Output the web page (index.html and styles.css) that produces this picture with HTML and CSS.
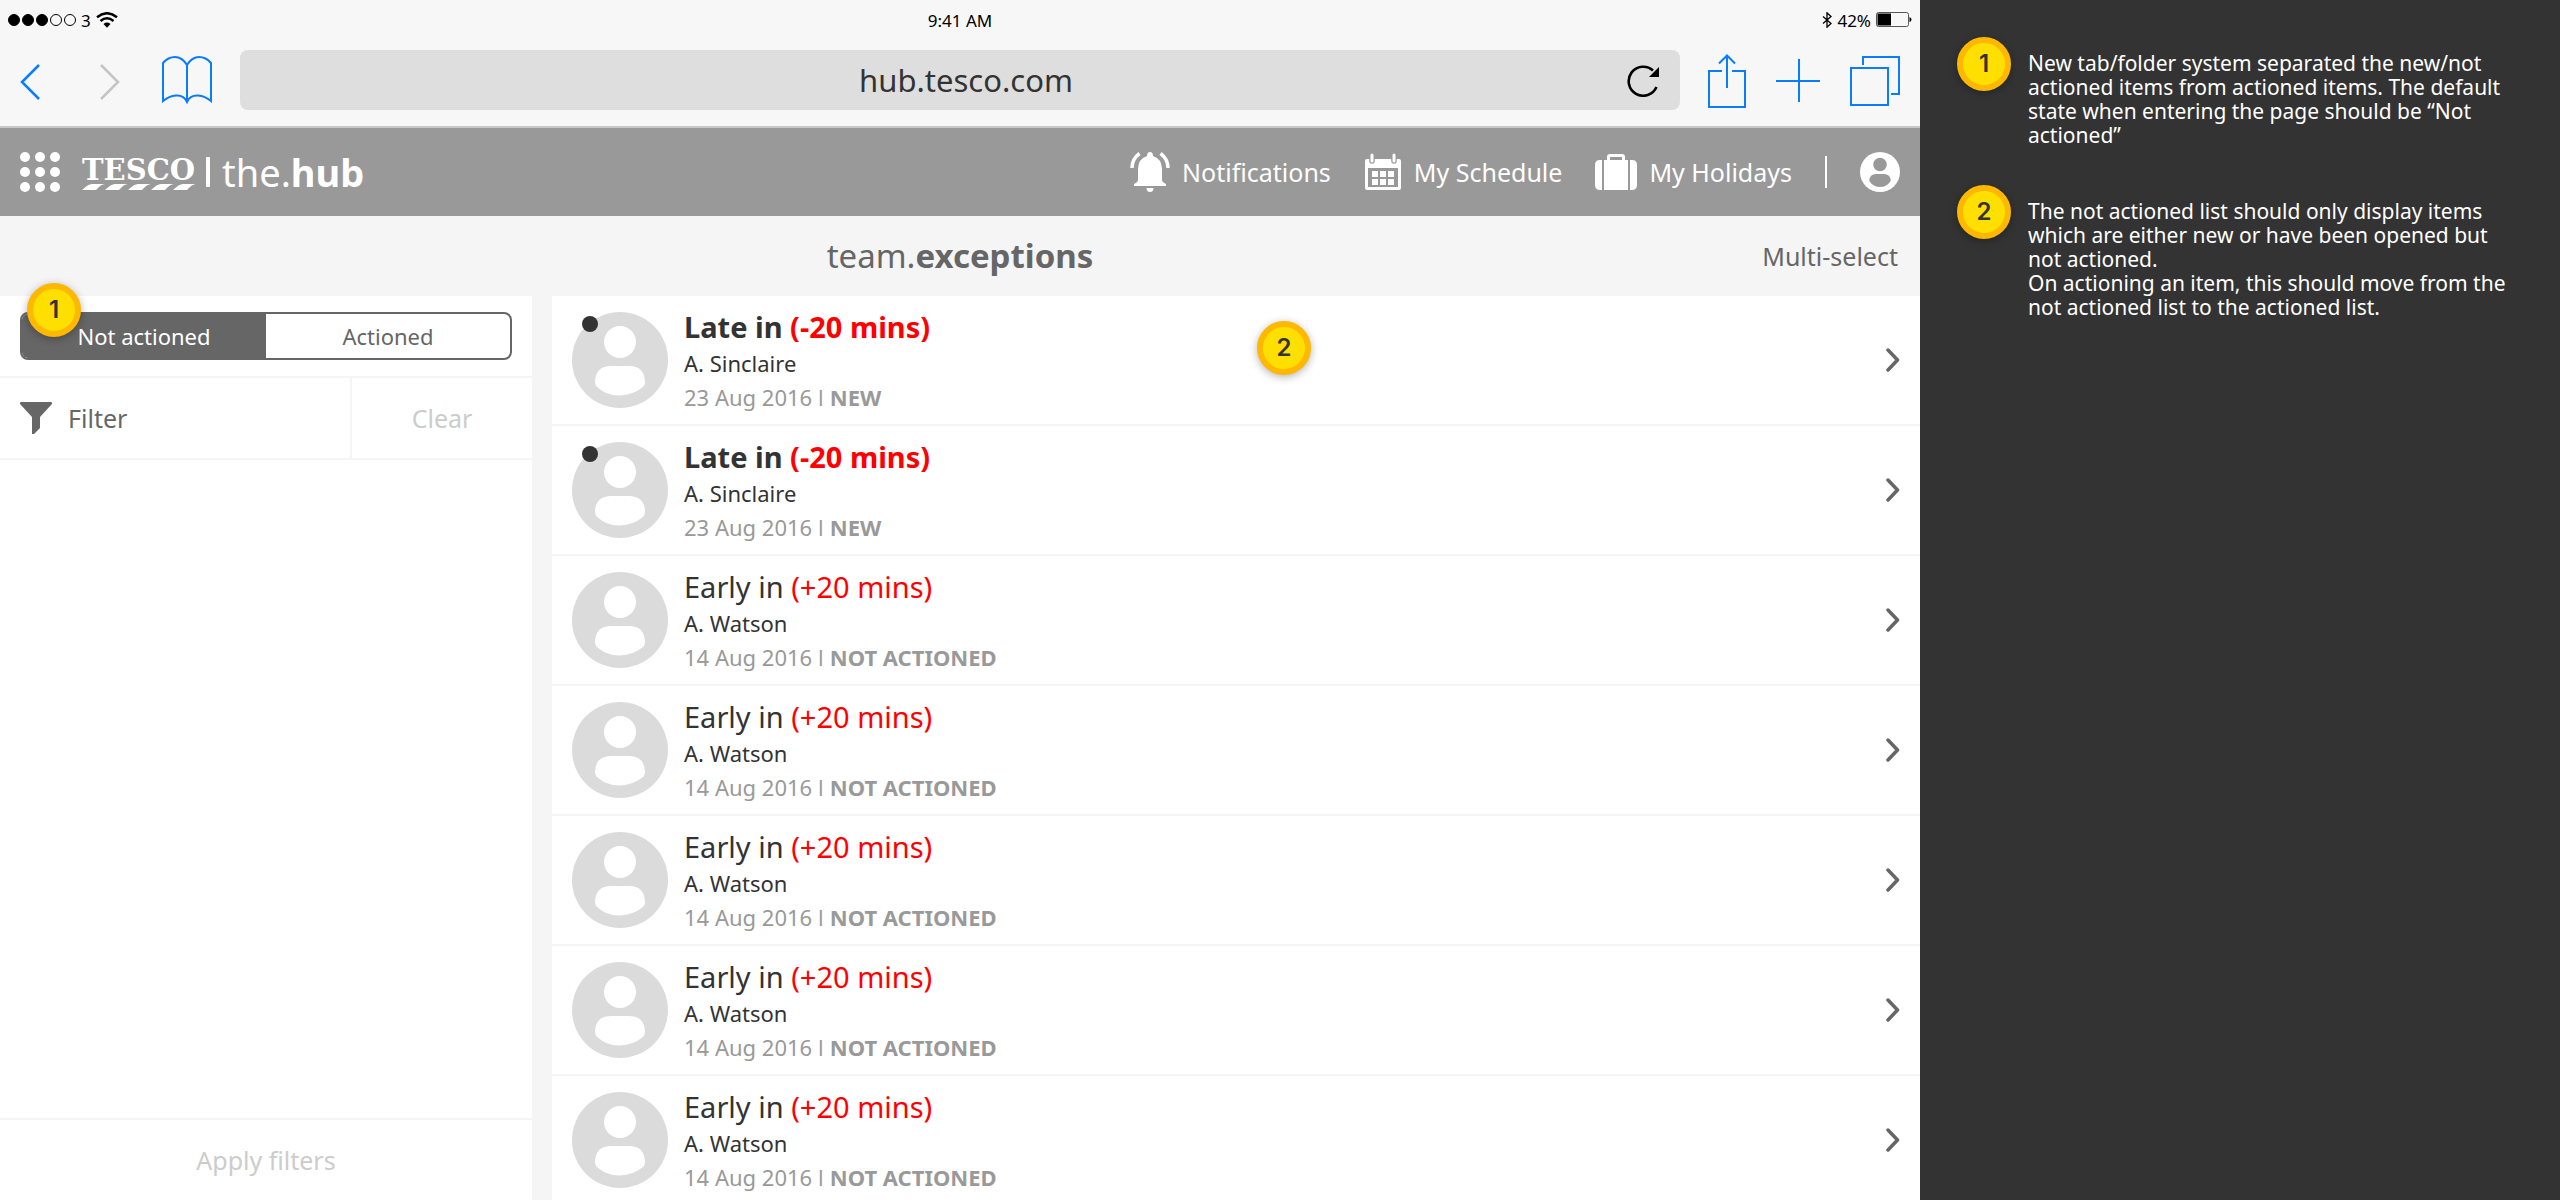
FILE: index.html
```html
<!DOCTYPE html>
<html lang="en">
<head>
<meta charset="utf-8">
<title>team.exceptions</title>
<link rel="stylesheet" href="styles.css">
</head>
<body>
<svg class="defs" aria-hidden="true">
  <symbol id="person" viewBox="0 0 96 96">
    <circle cx="48" cy="48" r="48" fill="#dbdbdb"/>
    <circle cx="48" cy="30" r="16" fill="#fff"/>
    <path d="M23 70v-1q1-15 16-15h18q15 0 16 15v1q0 3-2 5Q61 83 48 83.500T25 75q-2-2-2-5z" fill="#fff"/>
  </symbol>
  <symbol id="chevron" viewBox="0 0 14 24">
    <path d="M2 2l9.500 10L2 22" fill="none" stroke="#666" stroke-width="3.500" stroke-linecap="round" stroke-linejoin="round"/>
  </symbol>
</svg>
<div class="board">
  <div class="device">
    <div class="browser">
      <div class="status">
        <div class="status-left">
          <svg width="68" height="12" viewBox="0 0 68 12"><g stroke="#000"><circle cx="6" cy="6" r="5.500"/><circle cx="20" cy="6" r="5.500"/><circle cx="34" cy="6" r="5.500"/><circle cx="48" cy="6" r="5.500" fill="none"/><circle cx="62" cy="6" r="5.500" fill="none"/></g></svg>
          <span>3</span>
          <svg width="22" height="16" viewBox="0 0 22 16"><g fill="none" stroke="#000" stroke-width="2.400"><path d="M1 5.200Q11-2.800 21 5.200"/><path d="M4.500 9Q11 3.500 17.500 9"/></g><path d="M7.500 12Q11 9.200 14.500 12L11 15.800z"/></svg>
        </div>
        <time>9:41 AM</time>
        <div class="status-right">
          <svg width="10" height="16" viewBox="0 0 10 16"><path d="M1 4.500l8 7-4 3.700V.8l4 3.700-8 7" fill="none" stroke="#000" stroke-width="1.300"/></svg>
          <span>42%</span>
          <svg width="36" height="16" viewBox="0 0 36 16"><rect x=".5" y=".5" width="32" height="14" rx="2" fill="none" stroke="#555"/><path d="M1.500 1.500H15v12H1.500zM33.500 5q2 .5 2 2.500t-2 2.500z"/></svg>
        </div>
      </div>
      <div class="toolbar">
        <button class="tool" aria-label="Back"><svg width="20" height="40" viewBox="0 -4 20 40"><path d="M19 1L2 18l17 17" fill="none" stroke="#0a7cff" stroke-width="2.500"/></svg></button>
        <button class="tool forward" aria-label="Forward"><svg width="20" height="40" viewBox="0 -4 20 40"><path d="M1 1l17 17L1 35" fill="none" stroke="#c4c4c4" stroke-width="2.500"/></svg></button>
        <button class="tool book" aria-label="Bookmarks"><svg width="50" height="48" viewBox="0 0 50 48"><path d="M25 9Q20 1 13 1T1 7v38q6-5 13-5.500Q22 39 25 46q3-7 11-6.500Q43 40 49 45V7Q44 1 37 1T25 9v37" fill="none" stroke="#0a7cff" stroke-width="2"/></svg></button>
        <div class="address">
          <input class="url" type="text" value="hub.tesco.com" aria-label="Address">
          <button class="tool" aria-label="Reload"><svg width="34" height="34" viewBox="0 0 34 34"><path d="M27 7.500A14.500 14.500 0 1 0 30.500 24" fill="none" stroke="#000" stroke-width="2.600"/><path d="M33 4v10H23z"/></svg></button>
        </div>
        <button class="tool share" aria-label="Share"><svg width="38" height="56" viewBox="0 -2 38 56"><path d="M14 17H1v36h36V17H24M19 34V2M11 9.500L19 1.500l8 8" fill="none" stroke="#0a7cff" stroke-width="2"/></svg></button>
        <button class="tool plus" aria-label="New tab"><svg width="44" height="44" viewBox="0 0 44 44"><path d="M0 23h44M23 1v43" fill="none" stroke="#0a7cff" stroke-width="2"/></svg></button>
        <button class="tool" aria-label="Tabs"><svg width="50" height="52" viewBox="0 -2 50 52"><path d="M1 12h37v37H1zM13 9V1h36v37h-8" fill="none" stroke="#0a7cff" stroke-width="2"/></svg></button>
      </div>
    </div>
    <header class="header">
      <button class="tool" aria-label="Menu"><svg width="40" height="40" viewBox="0 0 40 40" fill="#fff"><circle cx="5" cy="5" r="5"/><circle cx="20" cy="5" r="5"/><circle cx="35" cy="5" r="5"/><circle cx="5" cy="20" r="5"/><circle cx="20" cy="20" r="5"/><circle cx="35" cy="20" r="5"/><circle cx="5" cy="35" r="5"/><circle cx="20" cy="35" r="5"/><circle cx="35" cy="35" r="5"/></svg></button>
      <a class="brand" href="#">
        <span class="logo">
          <span class="logo-name">TESCO</span>
          <svg width="114" height="6" viewBox="0 0 114 6" fill="#fff"><path d="M0 6Q6 0 10 0h13q-4 0-9 6zM23 6q6-6 10-6h13q-4 0-9 6zM46 6q6-6 10-6h13q-4 0-9 6zM69 6q6-6 10-6h13q-4 0-9 6zM91 6q6-6 10-6h13q-4 0-9 6z"/></svg>
        </span>
        <span class="brand-bar"></span>
        <span class="hub">the.<b>hub</b></span>
      </a>
      <nav class="nav">
        <a href="#"><svg width="40" height="40" viewBox="0 0 40 40" fill="#fff"><path d="M17 4q0-4 3-4t3 4q9 3 9 13v11q0 2 4 4v2H4v-2q4-2 4-4V17Q8 7 17 4zM16.500 36h7q0 4-3.500 4t-3.500-4z"/><path d="M2 16Q2 7 9.500 1.500M38 16Q38 7 30.500 1.500" fill="none" stroke="#fff" stroke-width="3.500"/></svg>Notifications</a>
        <a href="#"><svg width="38" height="38" viewBox="0 0 38 38"><path fill="#fff" fill-rule="evenodd" d="M3 6h32q2 0 2 2v27q0 2-2 2H3q-2 0-2-2V8q0-2 2-2zM4 15v19h30V15z"/><path d="M8 18h6v6H8zM16 18h6v6h-6zM24 18h6v6h-6zM8 26h6v6H8zM16 26h6v6h-6zM24 26h6v6h-6z" fill="#fff"/><path d="M8 3v5M30 3v5" stroke="#999" stroke-width="5.500" stroke-linecap="round"/><path d="M8 2v6M30 2v6" stroke="#fff" stroke-width="3" stroke-linecap="round"/></svg>My Schedule</a>
        <a href="#"><svg width="42" height="36" viewBox="0 0 42 36" fill="#fff"><path d="M7 6H5Q0 6 0 11v20q0 5 5 5h2zM35 6h2q5 0 5 5v20q0 5-5 5h-2zM9 6h3V3q0-3 3-3h12q3 0 3 3v3h3v30H9zM15 3v3h12V3z" fill-rule="evenodd"/></svg>My Holidays</a>
        <span class="nav-bar"></span>
        <button class="tool" aria-label="Profile"><svg width="40" height="40" viewBox="0 0 40 40"><circle cx="20" cy="20" r="20" fill="#fff"/><circle cx="20" cy="12.500" r="6.800" fill="#999"/><path d="M9.300 29q0-7 7-7h7.400q7 0 7 7-4 6-10.700 6T9.300 29z" fill="#999"/></svg></button>
      </nav>
    </header>
    <div class="titlebar">
      <h1>team.<b>exceptions</b></h1>
      <button class="multi">Multi-select</button>
    </div>
    <main class="content">
      <aside class="filters">
        <div class="tabs-row">
          <div class="tabs">
            <button class="tab active">Not actioned</button>
            <button class="tab">Actioned</button>
          </div>
          <span class="marker marker-tabs">1</span>
        </div>
        <div class="filter-row">
          <div class="filter-title"><svg width="32" height="32" viewBox="0 0 32 32"><path d="M1 0h30q2 1 .5 2.500L20 15v11l-6 6h-2V15L.5 2.500Q-1 1 1 0z" fill="#666"/></svg>Filter</div>
          <button class="clear">Clear</button>
        </div>
        <button class="apply">Apply filters</button>
      </aside>
      <section class="list-pane">
        <ul class="list">
          <li class="item new"><span class="avatar"><svg width="96" height="96"><use href="#person"/></svg><i class="dot"></i></span><div class="info"><h2>Late in <em>(-20 mins)</em></h2><p>A. Sinclaire</p><p class="meta">23 Aug 2016 <span class="sep">I</span> <b>NEW</b></p></div><svg width="14" height="24"><use href="#chevron"/></svg></li>
          <li class="item new"><span class="avatar"><svg width="96" height="96"><use href="#person"/></svg><i class="dot"></i></span><div class="info"><h2>Late in <em>(-20 mins)</em></h2><p>A. Sinclaire</p><p class="meta">23 Aug 2016 <span class="sep">I</span> <b>NEW</b></p></div><svg width="14" height="24"><use href="#chevron"/></svg></li>
          <li class="item"><span class="avatar"><svg width="96" height="96"><use href="#person"/></svg></span><div class="info"><h2>Early in <em>(+20 mins)</em></h2><p>A. Watson</p><p class="meta">14 Aug 2016 <span class="sep">I</span> <b>NOT ACTIONED</b></p></div><svg width="14" height="24"><use href="#chevron"/></svg></li>
          <li class="item"><span class="avatar"><svg width="96" height="96"><use href="#person"/></svg></span><div class="info"><h2>Early in <em>(+20 mins)</em></h2><p>A. Watson</p><p class="meta">14 Aug 2016 <span class="sep">I</span> <b>NOT ACTIONED</b></p></div><svg width="14" height="24"><use href="#chevron"/></svg></li>
          <li class="item"><span class="avatar"><svg width="96" height="96"><use href="#person"/></svg></span><div class="info"><h2>Early in <em>(+20 mins)</em></h2><p>A. Watson</p><p class="meta">14 Aug 2016 <span class="sep">I</span> <b>NOT ACTIONED</b></p></div><svg width="14" height="24"><use href="#chevron"/></svg></li>
          <li class="item"><span class="avatar"><svg width="96" height="96"><use href="#person"/></svg></span><div class="info"><h2>Early in <em>(+20 mins)</em></h2><p>A. Watson</p><p class="meta">14 Aug 2016 <span class="sep">I</span> <b>NOT ACTIONED</b></p></div><svg width="14" height="24"><use href="#chevron"/></svg></li>
          <li class="item"><span class="avatar"><svg width="96" height="96"><use href="#person"/></svg></span><div class="info"><h2>Early in <em>(+20 mins)</em></h2><p>A. Watson</p><p class="meta">14 Aug 2016 <span class="sep">I</span> <b>NOT ACTIONED</b></p></div><svg width="14" height="24"><use href="#chevron"/></svg></li>
        </ul>
        <span class="marker marker-list">2</span>
      </section>
    </main>
  </div>
  <aside class="notes">
    <div class="note"><span class="marker">1</span><p>New tab/folder system separated the new/not actioned items from actioned items. The default state when entering the page should be “Not actioned”</p></div>
    <div class="note"><span class="marker">2</span><p>The not actioned list should only display items which are either new or have been opened but not actioned.<br>On actioning an item, this should move from the not actioned list to the actioned list.</p></div>
  </aside>
</div>
</body>
</html>
```

FILE: styles.css
```css
* { box-sizing: border-box; }
body {
  margin: 0;
  background: #333;
  color: #333;
  font-family: "Noto Sans", sans-serif;
  font-size: 22px;
}
svg { display: block; flex: none; }
.defs { position: absolute; width: 0; height: 0; }
h1, h2, p, ul { margin: 0; padding: 0; font-weight: 400; }
button, input {
  border: 0;
  padding: 0;
  background: none;
  color: inherit;
  font: inherit;
}
a { color: inherit; text-decoration: none; }

.board { display: grid; grid-template-columns: 3fr 1fr; height: 100vh; overflow: hidden; }
.device { display: flex; flex-direction: column; min-width: 0; min-height: 0; background: #f5f5f5; }

/* Browser chrome */
.browser { background: #f7f7f7; border-bottom: 2px solid #c7c7c7; }
.status {
  display: grid;
  grid-template-columns: 1fr auto 1fr;
  align-items: center;
  height: 40px;
  padding: 0 8px;
  color: #000;
  font-size: 17px;
}
.status-left, .status-right { display: flex; align-items: center; gap: 5px; }
.status-right { justify-content: flex-end; }
.toolbar { display: flex; align-items: center; padding: 10px 20px 16px; }
.tool { display: block; flex: none; }
.forward { margin-left: 60px; }
.book { margin: 0 28px 0 42px; }
.address {
  display: flex;
  align-items: center;
  flex: 1;
  height: 60px;
  padding: 0 20px;
  border-radius: 8px;
  background: #dedede;
}
.url { flex: 1; min-width: 0; padding-left: 46px; text-align: center; font-size: 31px; }
.share { margin-left: 28px; }
.plus { margin: 0 30px; }

/* Site header */
.header {
  display: flex;
  align-items: center;
  justify-content: space-between;
  height: 88px;
  padding: 0 20px;
  background: #999;
  color: #fff;
}
.brand { display: flex; align-items: center; margin: 0 auto 0 22px; }
.logo { display: flex; flex-direction: column; gap: 3px; padding-top: 4px; }
.logo-name { font: 700 29px/22px "DejaVu Serif", serif; }
.brand-bar { width: 4px; height: 30px; margin: 0 12px 0 10px; background: #fff; }
.hub { font-size: 38px; line-height: 48px; }
.nav { display: flex; align-items: center; gap: 33px; font-size: 25px; }
.nav a { display: flex; align-items: center; gap: 12px; }
.nav-bar { width: 2px; height: 32px; background: #fff; }

/* Title bar */
.titlebar {
  display: grid;
  grid-template-columns: 1fr auto 1fr;
  align-items: center;
  height: 80px;
  padding: 0 22px;
  color: #666;
}
.titlebar h1 { grid-column: 2; font-size: 33px; line-height: 44px; }
.multi { justify-self: end; font-size: 25px; }

.content { display: grid; grid-template-columns: 532px 1fr; gap: 20px; flex: 1; min-height: 0; }

/* Filter panel */
.filters { display: flex; flex-direction: column; background: #fff; color: #666; }
.tabs-row { position: relative; padding: 16px 20px; border-bottom: 2px solid #f5f5f5; }
.tabs {
  display: grid;
  grid-template-columns: 1fr 1fr;
  height: 48px;
  border: 2px solid #666;
  border-radius: 8px;
  overflow: hidden;
}
.tab { font-size: 22px; line-height: 42px; }
.tab.active { background: #666; color: #fff; }
.filter-row { display: flex; height: 82px; border-bottom: 2px solid #f5f5f5; font-size: 25px; }
.filter-title { display: flex; align-items: center; flex: 1; gap: 16px; padding-left: 20px; }
.clear { width: 182px; border-left: 2px solid #f5f5f5; color: #ccc; }
.apply { height: 82px; margin-top: auto; border-top: 2px solid #f5f5f5; color: #ccc; font-size: 25px; }

/* Exceptions list */
.list-pane { position: relative; min-height: 0; overflow: hidden; background: #fff; }
.list { list-style: none; }
.item {
  display: flex;
  align-items: center;
  gap: 16px;
  height: 130px;
  padding: 0 20px;
  border-bottom: 2px solid #f5f5f5;
}
.avatar { position: relative; }
.dot {
  position: absolute;
  top: 4px;
  left: 10px;
  width: 16px;
  height: 16px;
  border-radius: 50%;
  background: #333;
}
.info { flex: 1; padding-top: 2px; line-height: 34px; }
.info h2 { font-size: 29px; line-height: 38px; }
.info em { color: #f00; font-style: normal; }
.info .meta { color: #999; }
.new h2 { font-weight: 700; }
.sep { font-family: "Open Sans", sans-serif; }

/* Numbered markers */
.marker {
  display: flex;
  align-items: center;
  justify-content: center;
  flex: none;
  width: 54px;
  height: 54px;
  border: 6px solid #ffb800;
  border-radius: 50%;
  background: #ffdf00;
  box-shadow: 0 2px 8px rgba(0, 0, 0, .3);
  color: #333;
  font: 600 24px/1 Inter, sans-serif;
}
.marker-tabs { position: absolute; top: -13px; left: 27px; }
.marker-list { position: absolute; top: 25px; left: 705px; }

.notes {
  display: flex;
  flex-direction: column;
  gap: 38px;
  padding: 37px 40px 0 37px;
  background: #333;
  color: #fff;
  font-size: 21px;
  line-height: 24px;
}
.note { display: flex; gap: 17px; }
.note p { padding-top: 14px; }
```
